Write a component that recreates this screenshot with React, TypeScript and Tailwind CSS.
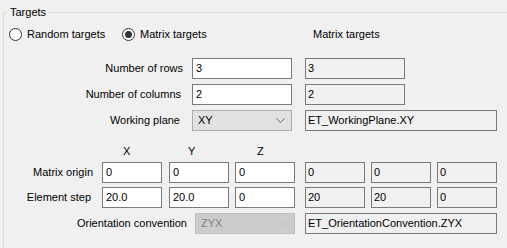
import React from 'react';

const font = { fontFamily: '"Liberation Sans", Arial, sans-serif' };

function Radio({ checked }: { checked?: boolean }) {
  return (
    <span className="w-[13px] h-[13px] shrink-0 rounded-full border border-[#333333] bg-white flex items-center justify-center">
      {checked && <span className="w-[7px] h-[7px] rounded-full bg-[#333333]" />}
    </span>
  );
}

function Edit({ value, w = 'w-[100px]' }: { value: string; w?: string }) {
  return (
    <div className={`${w} h-[21px] shrink-0 border border-[#7a7a7a] bg-white pl-[3px] flex items-center leading-none`}>
      {value}
    </div>
  );
}

function ReadOnly({ value, w = 'w-[100px]' }: { value: string; w?: string }) {
  return (
    <div className={`${w} h-[21px] shrink-0 border border-[#7a7a7a] bg-[#f0f0f0] pl-[2px] flex items-center leading-none`}>
      {value}
    </div>
  );
}

function Chevron({ color }: { color: string }) {
  return (
    <svg width="9" height="6" viewBox="0 0 9 6" className="shrink-0">
      <polyline points="0.5,0.5 4.5,4.5 8.5,0.5" fill="none" stroke={color} strokeWidth="1" />
    </svg>
  );
}

function Combo({ value, disabled }: { value: string; disabled?: boolean }) {
  return (
    <div
      className={`w-[100px] h-[21px] shrink-0 border flex items-center justify-between pl-[5px] pr-[6px] leading-none ${
        disabled ? 'bg-[#cccccc] border-[#bfbfbf] text-[#838383]' : 'bg-[#e1e1e1] border-[#adadad] text-black'
      }`}
    >
      <span>{value}</span>
      <Chevron color={disabled ? '#bfbfbf' : '#606060'} />
    </div>
  );
}

export default function App() {
  return (
    <div className="w-[507px] h-[248px] bg-[#f0f0f0] overflow-hidden text-[11px] text-black" style={font}>
      <div className="relative mt-[12px] ml-[3px] h-[236px] border-l border-t border-[#dcdcdc]">
        {/* titre du groupe */}
        <span className="absolute left-[3px] top-[-10px] px-[3px] bg-[#f0f0f0] leading-[18px]">Targets</span>

        <div className="pt-[15px] pl-[5px]">
          {/* choix du mode */}
          <div className="flex items-center h-[13px]">
            <div className="w-[113px] shrink-0 flex items-center gap-[5px]">
              <Radio />
              <span className="leading-none">Random targets</span>
            </div>
            <div className="w-[191px] shrink-0 flex items-center gap-[5px]">
              <Radio checked />
              <span className="leading-none">Matrix targets</span>
            </div>
            <span className="leading-none">Matrix targets</span>
          </div>

          {/* lignes / colonnes / plan */}
          <div className="mt-[17px] flex flex-col gap-[5px]">
            <div className="flex items-center">
              <span className="w-[174px] text-right">Number of rows</span>
              <div className="ml-[9px]"><Edit value="3" /></div>
              <div className="ml-[13px]"><ReadOnly value="3" /></div>
            </div>
            <div className="flex items-center">
              <span className="w-[174px] text-right pr-[2px]">Number of columns</span>
              <div className="ml-[9px]"><Edit value="2" /></div>
              <div className="ml-[13px]"><ReadOnly value="2" /></div>
            </div>
            <div className="flex items-center">
              <span className="w-[174px] text-right pr-[3px]">Working plane</span>
              <div className="ml-[9px]"><Combo value="XY" /></div>
              <div className="ml-[13px]"><ReadOnly value="ET_WorkingPlane.XY" w="w-[192px]" /></div>
            </div>
          </div>

          {/* en-tetes X Y Z */}
          <div className="mt-[12px] flex h-[16px] items-center leading-none">
            <span className="w-[93px]" />
            <span className="w-[67px] pl-[21px]">X</span>
            <span className="w-[66px] pl-[19px]">Y</span>
            <span className="pl-[22px]">Z</span>
          </div>

          {/* origine et pas */}
          <div className="mt-[3px] flex flex-col gap-[4px]">
            <div className="flex items-center">
              <span className="w-[84px] text-right">Matrix origin</span>
              <div className="ml-[9px]"><Edit value="0" w="w-[60px]" /></div>
              <div className="ml-[7px]"><Edit value="0" w="w-[60px]" /></div>
              <div className="ml-[6px]"><Edit value="0" w="w-[60px]" /></div>
              <div className="ml-[10px]"><ReadOnly value="0" w="w-[60px]" /></div>
              <div className="ml-[6px]"><ReadOnly value="0" w="w-[60px]" /></div>
              <div className="ml-[6px]"><ReadOnly value="0" w="w-[60px]" /></div>
            </div>
            <div className="flex items-center">
              <span className="w-[84px] text-right pr-[2px]">Element step</span>
              <div className="ml-[9px]"><Edit value="20.0" w="w-[60px]" /></div>
              <div className="ml-[7px]"><Edit value="20.0" w="w-[60px]" /></div>
              <div className="ml-[6px]"><Edit value="0" w="w-[60px]" /></div>
              <div className="ml-[10px]"><ReadOnly value="20" w="w-[60px]" /></div>
              <div className="ml-[6px]"><ReadOnly value="20" w="w-[60px]" /></div>
              <div className="ml-[6px]"><ReadOnly value="0" w="w-[60px]" /></div>
            </div>
            <div className="flex items-center mt-[1px]">
              <span className="w-[178px] text-right">Orientation convention</span>
              <div className="ml-[8px]"><Combo value="ZYX" disabled /></div>
              <div className="ml-[10px]"><ReadOnly value="ET_OrientationConvention.ZYX" w="w-[192px]" /></div>
            </div>
          </div>
        </div>
      </div>
    </div>
  );
}
